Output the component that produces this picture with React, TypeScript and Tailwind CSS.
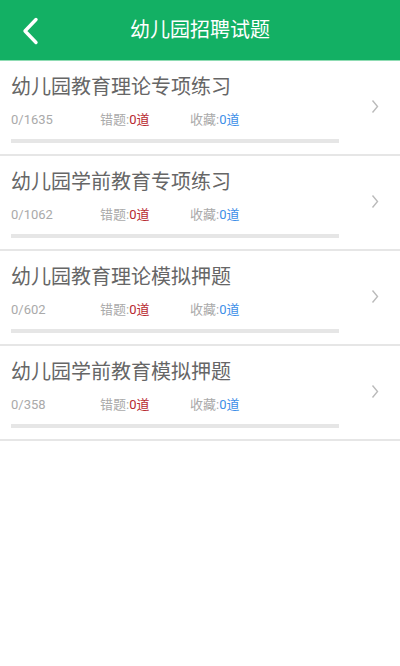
const items = [
  { title: '幼儿园教育理论专项练习', total: 1635 },
  { title: '幼儿园学前教育专项练习', total: 1062 },
  { title: '幼儿园教育理论模拟押题', total: 602 },
  { title: '幼儿园学前教育模拟押题', total: 358 },
];

export default function App() {
  return (
    <div
      className="w-[400px] h-[666px] bg-white"
      style={{ fontFamily: 'Roboto, "Noto Sans CJK SC", sans-serif' }}
    >
      <div className="relative h-[61px] bg-[#13b064] border-b border-[#8fdcb3] flex items-center justify-center">
        <svg className="absolute left-[21px] top-[17px]" width="18" height="28" viewBox="0 0 18 28">
          <path d="M15 2.5 L4 14 L15 25.5" fill="none" stroke="white" strokeWidth="3.4" strokeLinecap="round" strokeLinejoin="round" />
        </svg>
        <span className="text-white text-[20px] leading-none pb-[1px]">幼儿园招聘试题</span>
      </div>
      {items.map(item => (
        <div key={item.title} className="flex items-center border-b-2 border-[#e6e6e6] pl-[11px] pr-[21px]">
          <div className="w-[328px] pt-[12px] pb-[11px]">
            <div className="h-[28px] leading-[28px] text-[20px] text-[#666666]">{item.title}</div>
            <div className="mt-[10px] h-[18px] leading-[18px] text-[13px] flex text-[#aaaaaa]">
              <span className="w-[89px]">0/{item.total}</span>
              <span className="w-[90px]">错题:<span className="text-[#b7282e]">0道</span></span>
              <span>收藏:<span className="text-[#3d8fe8]">0道</span></span>
            </div>
            <div className="mt-[10px] h-[4px] bg-[#e6e6e6]" />
          </div>
          <svg className="ml-auto mt-[-2px]" width="8" height="15" viewBox="0 0 8 15">
            <path d="M1.5 1.5 L6.5 7.5 L1.5 13.5" fill="none" stroke="#bbbbbb" strokeWidth="1.4" />
          </svg>
        </div>
      ))}
    </div>
  );
}
